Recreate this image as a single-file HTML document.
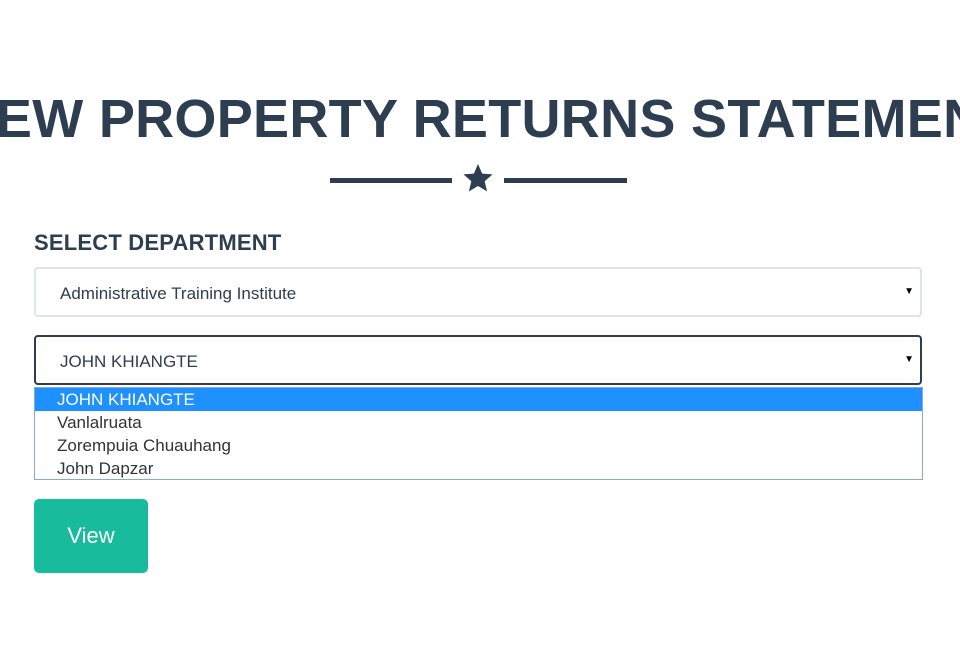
<!DOCTYPE html>
<html><head><style>
body{margin:0;width:960px;height:650px;background:#fff;font-family:"Liberation Sans",Arial,sans-serif;position:relative;overflow:hidden;color:#2c3e50}
.t{position:absolute;left:0;width:960px;top:88px;overflow:hidden;text-align:center}
.t span{display:inline-block;margin:0 -200px;white-space:nowrap;font-size:54px;font-weight:bold;letter-spacing:0.3px;color:#2c3e50}
.ln{position:absolute;top:178px;height:5px;background:#2c3e50}
.lbl{position:absolute;left:34px;top:230px;font-size:22px;font-weight:bold;letter-spacing:0.2px}
.sel{position:absolute;left:34px;width:884px;height:46px;border:2px solid #dce4ec;border-radius:4px;box-sizing:content-box;font-size:17px;line-height:50px;text-indent:24px;color:#2c3e50}
.arr{position:absolute;right:6px;top:-2px;font-size:10px;color:#000;text-indent:0}
.list{position:absolute;left:34px;top:387px;width:887px;height:91px;border:1px solid #8da6d0;font-size:17px}
.list div{height:23px;line-height:23px;padding-left:22px;color:#333}
.btn{position:absolute;left:34px;top:499px;width:114px;height:74px;background:#18bc9c;border-radius:5px;color:#fff;font-size:22px;line-height:74px;text-align:center}
</style></head><body>
<div class="t"><span>VIEW PROPERTY RETURNS STATEMENT</span></div>
<div class="ln" style="left:330px;width:122px"></div>
<div class="ln" style="left:504px;width:123px"></div>
<svg style="position:absolute;left:462px;top:162px" width="32" height="32" viewBox="0 0 24 24"><path fill="#2c3e50" d="M12 1.5l3.1 7.2 7.8.6-5.9 5.1 1.8 7.6L12 18l-6.8 4 1.8-7.6-5.9-5.1 7.8-.6z"/></svg>
<div class="lbl">SELECT DEPARTMENT</div>
<div class="sel" style="top:267px">Administrative Training Institute<span class="arr">▼</span></div>
<div class="sel" style="top:335px;border-color:#2c3e50">JOHN KHIANGTE<span class="arr">▼</span></div>
<div class="list">
<div style="background:#1e90ff;color:#fff">JOHN KHIANGTE</div>
<div>Vanlalruata</div>
<div>Zorempuia Chuauhang</div>
<div>John Dapzar</div>
</div>
<div class="btn">View</div>
</body></html>
